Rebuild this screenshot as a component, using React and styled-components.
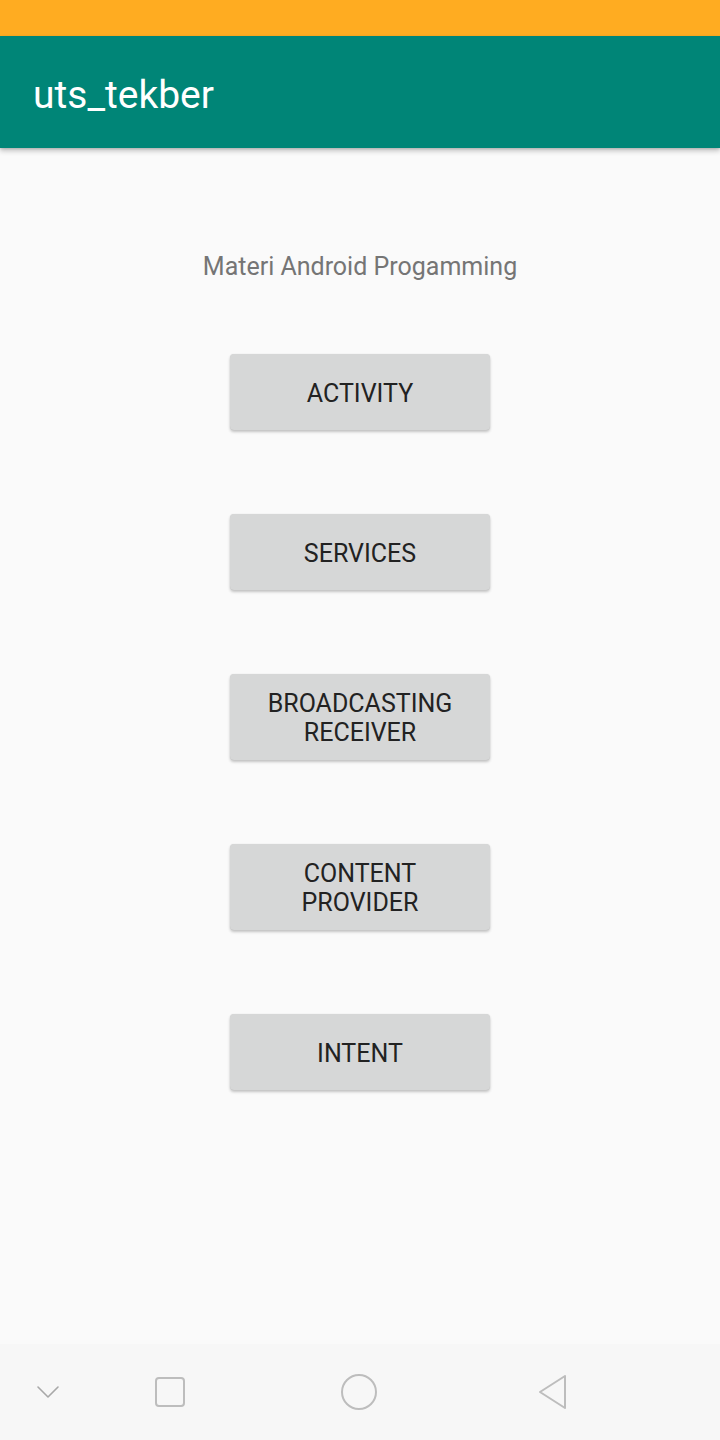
import React from "react";
import styled, { createGlobalStyle } from "styled-components";

const Global = createGlobalStyle`
  html, body { margin: 0; padding: 0; background: #fafafa; }
  body { font-family: Roboto, "Noto Sans", "Liberation Sans", sans-serif; }
  * { box-sizing: border-box; }
`;

const Screen = styled.div`
  width: 720px;
  height: 1440px;
  display: flex;
  flex-direction: column;
  background: #fafafa;
  overflow: hidden;
`;

const StatusBar = styled.div`
  height: 36px;
  flex: none;
  background: #ffac21;
`;

const AppBar = styled.header`
  height: 112px;
  flex: none;
  display: flex;
  align-items: center;
  padding: 6px 0 0 33px;
  background: #008577;
  box-shadow: 0 3px 5px rgba(0, 0, 0, 0.22), 0 1px 2px rgba(0, 0, 0, 0.12);
  position: relative;
  z-index: 1;
`;

const Title = styled.h1`
  margin: 0;
  font-family: Roboto, sans-serif;
  font-weight: 400;
  font-size: 39px;
  color: #ffffff;
  letter-spacing: 0;
`;

const Content = styled.main`
  flex: 1;
  display: flex;
  flex-direction: column;
  align-items: center;
  padding-top: 104px;
`;

const Subtitle = styled.p`
  margin: 0 0 73px;
  font-size: 25px;
  line-height: 29px;
  color: #757575;
`;

const ButtonList = styled.div`
  display: flex;
  flex-direction: column;
  align-items: center;
  gap: 84px;
`;

const MenuButton = styled.button`
  width: 260px;
  min-height: 76px;
  padding: 15px 16px 13px;
  border: none;
  border-radius: 4px;
  background: #d6d7d7;
  color: #222222;
  font-family: Roboto, sans-serif;
  font-size: 25px;
  line-height: 29px;
  text-transform: uppercase;
  text-align: center;
  box-shadow: 0 2px 3px rgba(0, 0, 0, 0.22), 0 0 1px rgba(0, 0, 0, 0.14);
  display: flex;
  align-items: center;
  justify-content: center;
`;

const NavBar = styled.nav`
  height: 96px;
  flex: none;
  display: flex;
  align-items: center;
  background: #f7f7f7;
`;

const NavIcon = styled.svg`
  flex: none;
  margin-left: ${(p) => p.$offset}px;
  display: block;
`;

const buttons = [
  ["Activity"],
  ["Services"],
  ["Broadcasting", "Receiver"],
  ["Content", "Provider"],
  ["Intent"],
];

export default function App() {
  return (
    <>
      <Global />
      <Screen>
        <StatusBar />
        <AppBar>
          <Title>uts_tekber</Title>
        </AppBar>
        <Content>
          <Subtitle>Materi Android Progamming</Subtitle>
          <ButtonList>
            {buttons.map((lines) => (
              <MenuButton key={lines[0]}>
                <span>
                  {lines.map((l, i) => (
                    <React.Fragment key={l}>
                      {i > 0 && <br />}
                      {l}
                    </React.Fragment>
                  ))}
                </span>
              </MenuButton>
            ))}
          </ButtonList>
        </Content>
        <NavBar>
          <NavIcon $offset={36} width="24" height="16" viewBox="0 0 24 16">
            <polyline points="2,3 12,13 22,3" fill="none" stroke="#a8a8a8" strokeWidth="1.6" strokeLinejoin="round" strokeLinecap="round" />
          </NavIcon>
          <NavIcon $offset={94} width="32" height="32" viewBox="0 0 32 32">
            <rect x="2" y="2" width="28" height="28" rx="3" fill="none" stroke="#bdbdbd" strokeWidth="2" />
          </NavIcon>
          <NavIcon $offset={154} width="38" height="38" viewBox="0 0 38 38">
            <circle cx="19" cy="19" r="17" fill="none" stroke="#bdbdbd" strokeWidth="2" />
          </NavIcon>
          <NavIcon $offset={158} width="34" height="38" viewBox="0 0 34 38">
            <path d="M29 3 L4 19 L29 35 Z" fill="none" stroke="#bdbdbd" strokeWidth="2" strokeLinejoin="round" />
          </NavIcon>
        </NavBar>
      </Screen>
    </>
  );
}
